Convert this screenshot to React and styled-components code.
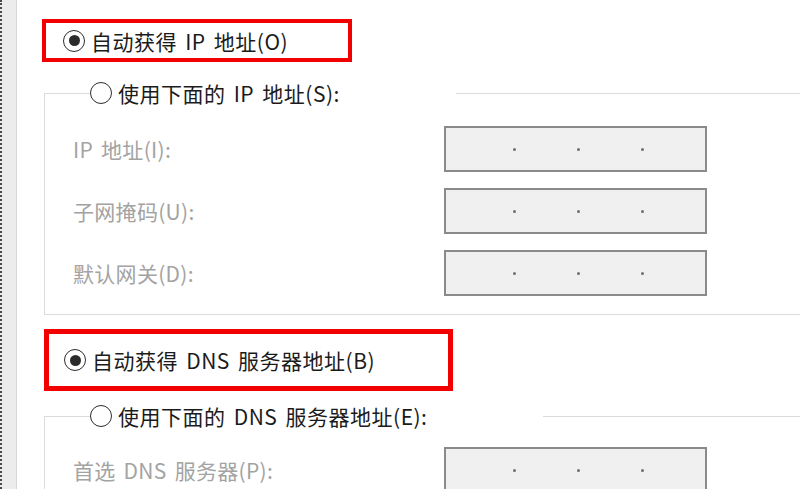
import React from 'react'
import styled, { createGlobalStyle } from 'styled-components'

const GlobalStyle = createGlobalStyle`
    html, body {
        margin: 0;
        padding: 0;
        background: #ffffff;
        overflow: hidden;
    }
    body {
        font-family: "Noto Sans CJK SC", "Noto Sans", sans-serif;
    }
`

const Page = styled.div`
    display: flex;
    width: 800px;
    height: 489px;
    overflow: hidden;
`

const SideStrip = styled.div`
    flex: 0 0 14px;
    background: #ececec;
    border-left: 2px dotted #4a4a4a;
    border-right: 1px solid #d6d6d6;
`

const Content = styled.div`
    flex: 1;
    display: flex;
    flex-direction: column;
    overflow: hidden;
`

const Highlight = styled.div`
    display: flex;
    align-items: center;
    flex-shrink: 0;
    box-sizing: border-box;
    width: ${props => props.boxWidth}px;
    height: ${props => props.boxHeight}px;
    margin-left: ${props => props.offset}px;
    margin-top: ${props => props.top}px;
    padding-left: ${props => props.inset}px;
    border: ${props => props.thickness}px solid #f20000;
`

const Option = styled.label`
    display: flex;
    align-items: center;
    gap: 6px;
    font-size: 21px;
    letter-spacing: 0.5px;
    word-spacing: 3px;
    color: #1b1b1b;
    white-space: nowrap;
    line-height: 26px;
`

const RadioCircle = styled.span`
    box-sizing: border-box;
    flex-shrink: 0;
    width: 22px;
    height: 22px;
    border-radius: 50%;
    border: 1.5px solid #2d2d2d;
    background: #fff;
    display: flex;
    align-items: center;
    justify-content: center;

    &::after {
        content: '';
        width: 11px;
        height: 11px;
        border-radius: 50%;
        background: ${props => (props.checked ? '#2b2b2b' : 'transparent')};
    }
`

const Group = styled.fieldset`
    flex-shrink: 0;
    margin: ${props => props.top}px 0 0 27px;
    padding: 0 0 18px 28px;
    width: 800px;
    border: 1px solid #dcdcdc;
    border-right: none;
`

const Caption = styled.legend`
    box-sizing: border-box;
    width: ${props => props.capWidth}px;
    margin-left: 17px;
    padding: 0;
    background: #fff;
`

const Rows = styled.div`
    display: flex;
    flex-direction: column;
    gap: 16px;
    margin-top: ${props => props.top}px;
`

const Row = styled.div`
    display: flex;
    align-items: center;
`

const FieldLabel = styled.span`
    width: 371px;
    font-size: 21px;
    letter-spacing: 0.3px;
    word-spacing: 3px;
    color: #a3a3a3;
    white-space: nowrap;
`

const IpField = styled.div`
    box-sizing: border-box;
    width: 263px;
    height: 46px;
    border: 2px solid #8a8a8a;
    background: #f0f0f0;
    display: flex;
    align-items: center;
    padding-left: 67px;
    gap: 61px;
`

const Dot = styled.span`
    width: 3px;
    height: 3px;
    border-radius: 50%;
    background: #6f6f6f;
`

function Radio({ checked, children }) {
    return (
        <Option>
            <RadioCircle checked={checked} />
            {children}
        </Option>
    )
}

function IpInput() {
    return (
        <IpField>
            <Dot />
            <Dot />
            <Dot />
        </IpField>
    )
}

export default function App() {
    return (
        <Page>
            <GlobalStyle />
            <SideStrip />
            <Content>
                <Highlight offset={25} top={19} inset={17} boxWidth={310} boxHeight={43} thickness={4}>
                    <Radio checked>自动获得 IP 地址(O)</Radio>
                </Highlight>
                <Group top={18}>
                    <Caption capWidth={366}>
                        <Radio>使用下面的 IP 地址(S):</Radio>
                    </Caption>
                    <Rows top={20}>
                        <Row>
                            <FieldLabel>IP 地址(I):</FieldLabel>
                            <IpInput />
                        </Row>
                        <Row>
                            <FieldLabel>子网掩码(U):</FieldLabel>
                            <IpInput />
                        </Row>
                        <Row>
                            <FieldLabel>默认网关(D):</FieldLabel>
                            <IpInput />
                        </Row>
                    </Rows>
                </Group>
                <Highlight offset={27} top={14} inset={15} boxWidth={409} boxHeight={62} thickness={5}>
                    <Radio checked>自动获得 DNS 服务器地址(B)</Radio>
                </Highlight>
                <Group top={12}>
                    <Caption capWidth={453}>
                        <Radio>使用下面的 DNS 服务器地址(E):</Radio>
                    </Caption>
                    <Rows top={18}>
                        <Row>
                            <FieldLabel>首选 DNS 服务器(P):</FieldLabel>
                            <IpInput />
                        </Row>
                    </Rows>
                </Group>
            </Content>
        </Page>
    )
}
